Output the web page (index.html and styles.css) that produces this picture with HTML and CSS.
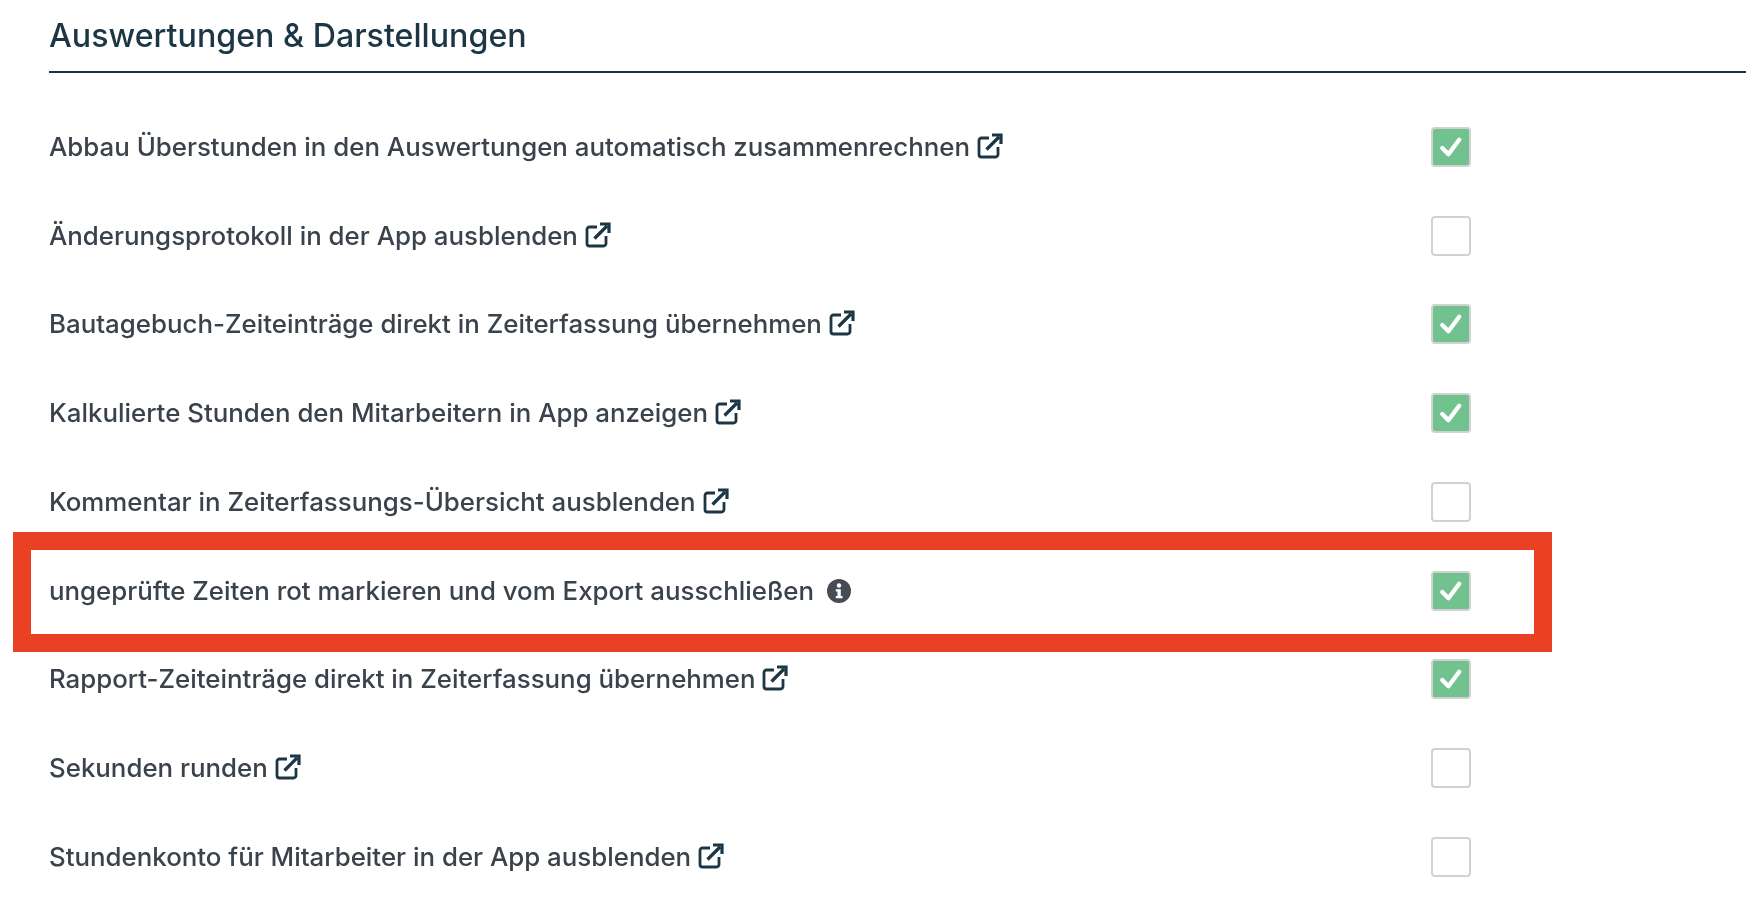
FILE: index.html
```html
<!doctype html>
<html lang="de">
<head>
    <meta charset="UTF-8">
    <title>Auswertungen &amp; Darstellungen</title>
    <link rel="stylesheet" href="styles.css">
</head>
<body>
    <svg class="icon-defs" width="0" height="0">
        <symbol id="ext" viewBox="0 0 26 26">
            <path d="M12 5H4.500A2.500 2.500 0 0 0 2 7.500V21.500A2.500 2.500 0 0 0 4.500 24H18.500A2.500 2.500 0 0 0 21 21.500V14" fill="none" stroke="currentColor" stroke-width="2.800"/>
            <path d="M9.500 16.500L22 4M15 2H24V11" fill="none" stroke="currentColor" stroke-width="3.200"/>
        </symbol>
        <symbol id="tick" viewBox="0 0 39 39">
            <path d="M11 20.500L17 26.500L27.500 12.500" fill="none" stroke="#fff" stroke-width="4.200" stroke-linecap="round" stroke-linejoin="round"/>
        </symbol>
    </svg>

    <div class="section">
        <h2 class="section-title">Auswertungen &amp; Darstellungen</h2>

        <div class="rows">
            <div class="row">
                <span class="row-label">Abbau Überstunden in den Auswertungen automatisch zusammenrechnen <svg class="ext-icon"><use href="#ext"/></svg></span>
                <span class="check on"><svg><use href="#tick"/></svg></span>
            </div>
            <div class="row">
                <span class="row-label">Änderungsprotokoll in der App ausblenden <svg class="ext-icon"><use href="#ext"/></svg></span>
                <span class="check"></span>
            </div>
            <div class="row">
                <span class="row-label">Bautagebuch-Zeiteinträge direkt in Zeiterfassung übernehmen <svg class="ext-icon"><use href="#ext"/></svg></span>
                <span class="check on"><svg><use href="#tick"/></svg></span>
            </div>
            <div class="row">
                <span class="row-label">Kalkulierte Stunden den Mitarbeitern in App anzeigen <svg class="ext-icon"><use href="#ext"/></svg></span>
                <span class="check on"><svg><use href="#tick"/></svg></span>
            </div>
            <div class="row">
                <span class="row-label">Kommentar in Zeiterfassungs-Übersicht ausblenden <svg class="ext-icon"><use href="#ext"/></svg></span>
                <span class="check"></span>
            </div>
            <div class="row row-marked">
                <span class="row-label">ungeprüfte Zeiten rot markieren und vom Export ausschließen
                    <svg class="info-icon" viewBox="0 0 24 24">
                        <circle cx="12" cy="12" r="12" fill="#454c56"/>
                        <circle cx="12" cy="6.500" r="2.200" fill="#fff"/>
                        <path d="M8.800 10.200H13.800V17H15.500V19.300H8.800V17H10.500V12.500H8.800Z" fill="#fff"/>
                    </svg>
                </span>
                <span class="check on"><svg><use href="#tick"/></svg></span>
                <div class="mark-box"></div>
            </div>
            <div class="row">
                <span class="row-label">Rapport-Zeiteinträge direkt in Zeiterfassung übernehmen <svg class="ext-icon"><use href="#ext"/></svg></span>
                <span class="check on"><svg><use href="#tick"/></svg></span>
            </div>
            <div class="row">
                <span class="row-label">Sekunden runden <svg class="ext-icon"><use href="#ext"/></svg></span>
                <span class="check"></span>
            </div>
            <div class="row">
                <span class="row-label">Stundenkonto für Mitarbeiter in der App ausblenden <svg class="ext-icon"><use href="#ext"/></svg></span>
                <span class="check"></span>
            </div>
        </div>
    </div>
</body>
</html>
```

FILE: styles.css
```css
*{
    padding: 0;
    margin: 0;
    box-sizing: border-box;
}
html, body{
    height: 100%;
    overflow: hidden;
    background: #fff;
}
body{
    font-family: Inter, "Liberation Sans", sans-serif;
    color: #3a424c;
}
.icon-defs{
    position: absolute;
}
.section{
    padding-left: 49px;
    filter: blur(.45px);
}
.section-title{
    height: 73px;
    padding-top: 15px;
    font-size: 32.2px;
    line-height: 42px;
    font-weight: 500;
    color: #1c3645;
    border-bottom: 2px solid #1c3645;
}
.rows{
    padding-top: 29.5px;
}
.row{
    display: flex;
    align-items: center;
    height: 88.75px;
    position: relative;
}
.row-label{
    width: 1381.5px;
    font-size: 25.85px;
    font-weight: 500;
    line-height: 32px;
    white-space: nowrap;
}
.ext-icon{
    width: 26px;
    height: 26px;
    vertical-align: -3px;
    color: #1c3645;
}
.info-icon{
    width: 24px;
    height: 24px;
    margin-left: 6px;
    vertical-align: -3px;
}
.check{
    width: 40px;
    height: 40px;
    border: 2px solid #d2d2d2;
    border-radius: 4px;
    background: #fff;
}
.check.on{
    background: #72c28f;
}
.check svg{
    display: block;
    width: 40px;
    height: 40px;
    margin: -2px;
}
.mark-box{
    position: absolute;
    left: -36px;
    top: -14px;
    width: 1539px;
    height: 120px;
    border: 18px solid #ea4125;
}
```
